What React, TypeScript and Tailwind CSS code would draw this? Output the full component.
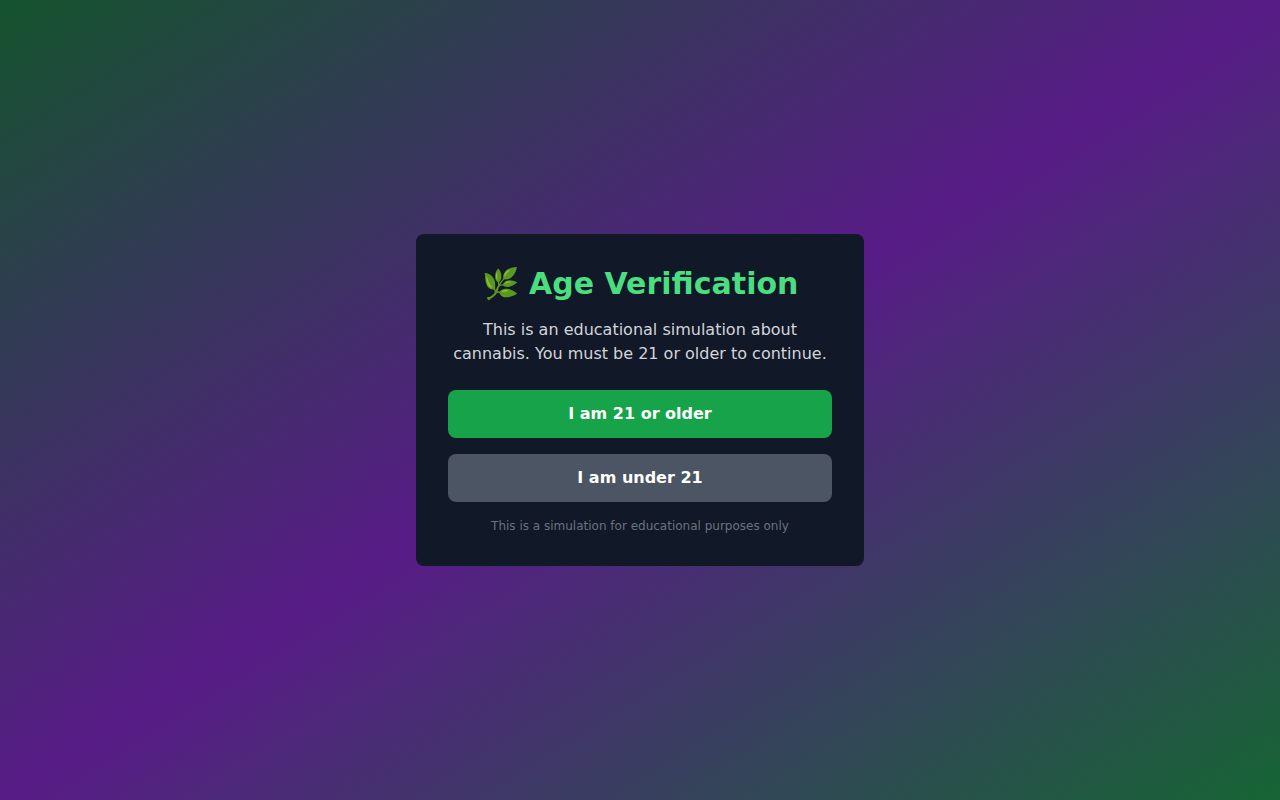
import { useState } from 'react';

function AgeGate({ onAnswer }: { onAnswer: (isAdult: boolean) => void }) {
  return (
    <main className="min-h-screen flex items-center justify-center p-4 font-['DejaVu_Sans',sans-serif] bg-[linear-gradient(to_bottom_right,#14532d,#581c87,#166534)]">
      <div className="w-full max-w-md rounded-lg bg-[#111827] p-8 text-center">
        <h1 className="mb-4 text-3xl font-bold text-[#4ade80]">🌿 Age Verification</h1>
        <p className="mb-6 text-[#d1d5db]">
          This is an educational simulation about cannabis. You must be 21 or older to continue.
        </p>
        <div className="space-y-4">
          <button
            type="button"
            onClick={() => onAnswer(true)}
            className="w-full rounded-lg bg-[#16a34a] px-6 py-3 font-bold text-white hover:bg-[#15803d]"
          >
            I am 21 or older
          </button>
          <button
            type="button"
            onClick={() => onAnswer(false)}
            className="w-full rounded-lg bg-[#4b5563] px-6 py-3 font-bold text-white hover:bg-[#374151]"
          >
            I am under 21
          </button>
        </div>
        <p className="mt-4 text-xs text-[#6b7280]">This is a simulation for educational purposes only</p>
      </div>
    </main>
  );
}

export default function App() {
  const [, setIsAdult] = useState<boolean | null>(null);

  return <AgeGate onAnswer={setIsAdult} />;
}
